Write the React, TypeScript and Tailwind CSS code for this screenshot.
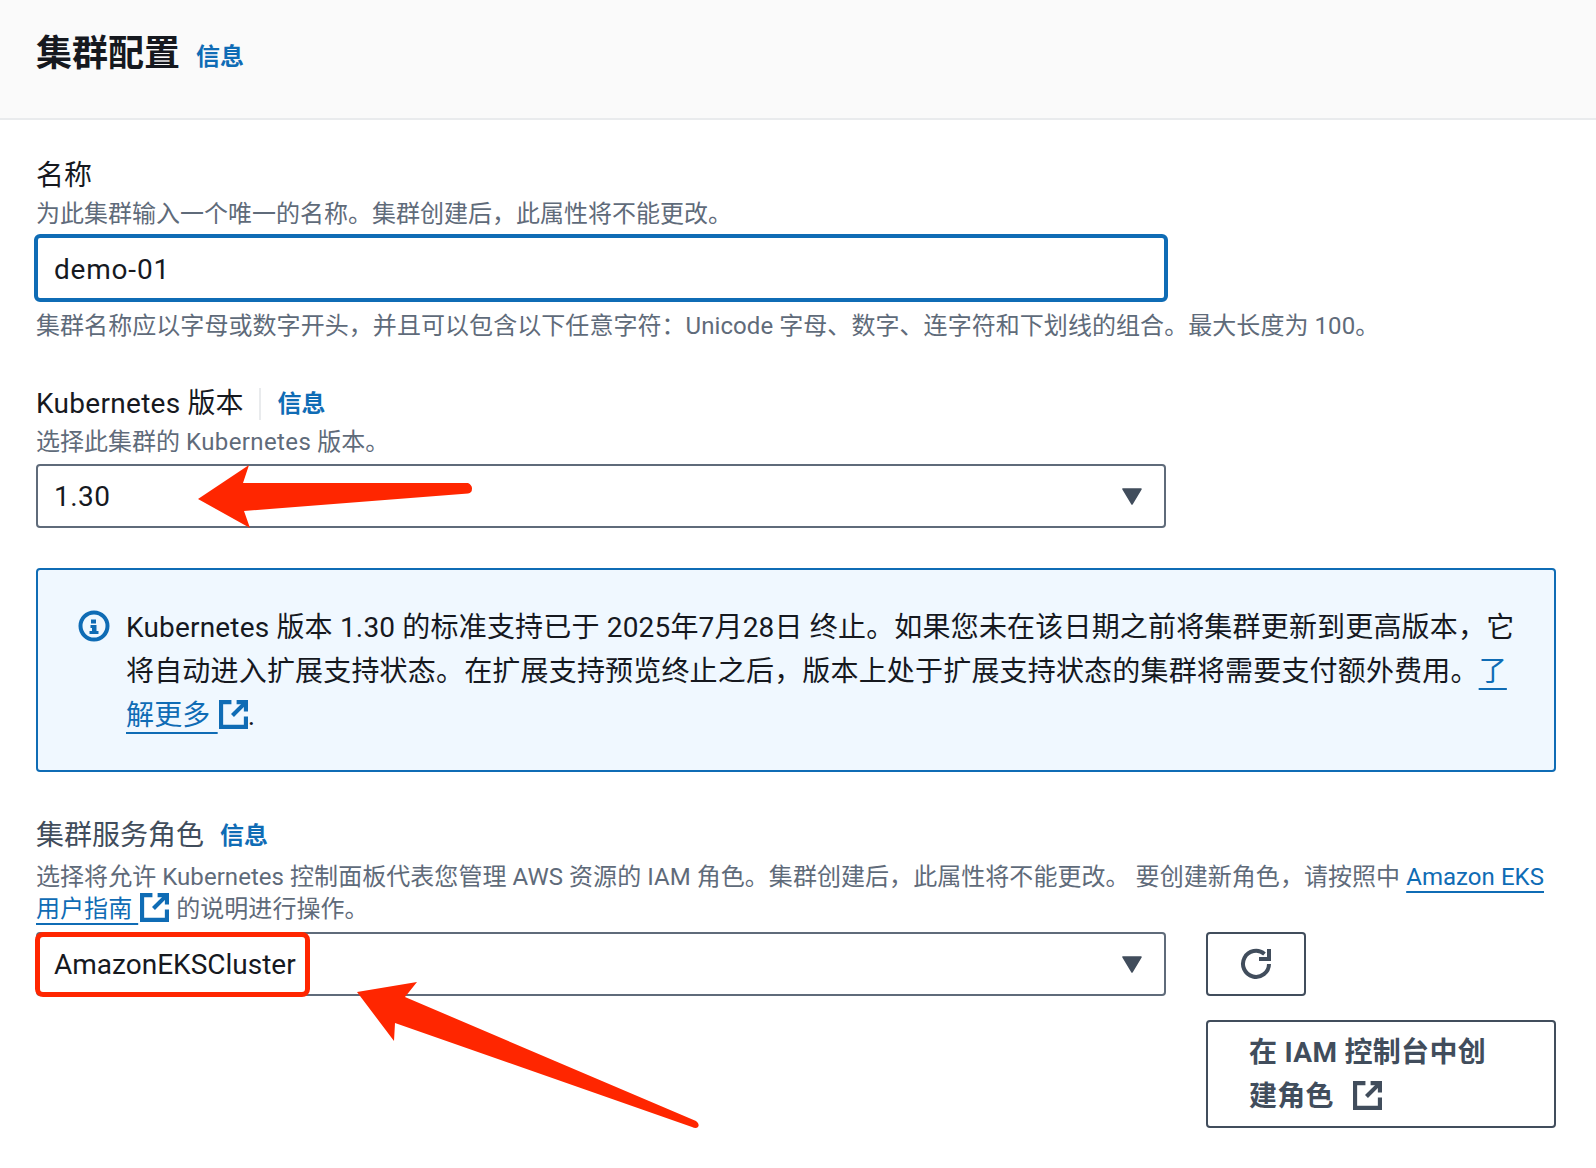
import React from 'react';

const FONT = "font-['Roboto','Noto_Sans_CJK_SC',sans-serif]";

const ExternalIcon = ({ className }: { className: string }) => (
  <svg viewBox="0 0 28 28" fill="none" stroke="currentColor" strokeWidth="4" className={className}>
    <path d="M12 2H2v24h24V16" />
    <path d="M17 2h9v9" />
    <path d="M25 3 13 15" />
  </svg>
);

const Caret = () => (
  <svg viewBox="0 0 20 17" className="w-5 h-[17px] text-[#414d5c] -mt-[2px]">
    <path d="M1 1h18l-9 15z" fill="currentColor" stroke="currentColor" strokeWidth="1.5" strokeLinejoin="round" />
  </svg>
);

const InfoLink = ({ className = '' }: { className?: string }) => (
  <span className={`text-[24px] font-bold text-[#0f6cb5] ${className}`}>信息</span>
);

const SelectBox = ({ value, className = '' }: { value: string; className?: string }) => (
  <div className="flex items-center justify-between h-[64px] w-[1130px] border-2 border-[#5f6b7a] rounded-[4px] pt-[2px] pl-[16px] pr-[22px] text-[28px] text-[#16191f]">
    <span className={className}>{value}</span>
    <Caret />
  </div>
);

export default function App() {
  return (
    <div className={`relative h-[1168px] overflow-hidden bg-white ${FONT}`}>
      {/* Header */}
      <div className="flex items-center gap-[16px] h-[120px] pl-[36px] pb-[10px] bg-[#fafafa] border-b-2 border-[#e9ebed]">
        <h2 className="text-[36px] font-bold text-[#16191f]">集群配置</h2>
        <InfoLink className="mt-[5px]" />
      </div>

      <div className="px-[36px] pt-[38px]">
        {/* Name */}
        <div className="text-[28px] leading-[36px] text-[#16191f]">名称</div>
        <div className="mt-[4px] text-[24px] leading-[32px] text-[#5f6b7a]">
          为此集群输入一个唯一的名称。集群创建后，此属性将不能更改。
        </div>
        <div className="mt-[4px] -ml-[2px] flex items-center h-[68px] w-[1134px] border-4 border-[#0f6cb5] rounded-[6px] pt-[4px] pl-[16px] text-[28px] tracking-[0.8px] text-[#16191f]">
          demo-01
        </div>
        <div className="mt-[8px] text-[24px] leading-[32px] tracking-[0.06px] text-[#5f6b7a]">
          集群名称应以字母或数字开头，并且可以包含以下任意字符：Unicode 字母、数字、连字符和下划线的组合。最大长度为 100。
        </div>

        {/* Kubernetes version */}
        <div className="mt-[44px] flex items-center h-[36px] text-[28px] text-[#16191f]">
          <span><span className="tracking-[0.3px]">Kubernetes</span> 版本</span>
          <span className="ml-[16px] mr-[16px] h-[32px] w-[2px] bg-[#e9ebed]" />
          <InfoLink />
        </div>
        <div className="mt-[4px] text-[24px] leading-[32px] text-[#5f6b7a]">
          选择此集群的 <span className="tracking-[0.4px]">Kubernetes</span> 版本。
        </div>
        <div className="mt-[6px]">
          <SelectBox value="1.30" className="tracking-[0.5px]" />
        </div>

        {/* Alert */}
        <div className="mt-[40px] flex h-[204px] w-[1520px] bg-[#f0f8ff] border-2 border-[#0f6cb5] rounded-[4px] pl-[40px] pr-[35px] pt-[36px]">
          <svg viewBox="0 0 32 32" className="shrink-0 mt-[4px] w-8 h-8 text-[#0f6cb5]">
            <circle cx="16" cy="16" r="13.5" fill="none" stroke="currentColor" strokeWidth="4" />
            <path d="M13 9.5h5v4h-5zM12.5 15h6v6h2v3h-9v-3h2.5v-3h-1.5z" fill="currentColor" />
          </svg>
          <div className="ml-[16px] text-[28px] leading-[44px] tracking-[0.18px] text-[#16191f]">
            Kubernetes 版本 1.30 的标准支持已于 2025年7月28日 终止。如果您未在该日期之前将集群更新到更高版本，它将自动进入扩展支持状态。在扩展支持预览终止之后，版本上处于扩展支持状态的集群将需要支付额外费用。
            <span className="text-[#0f6cb5] underline decoration-2 underline-offset-[7px]">了解更多 </span>
            <ExternalIcon className="inline-block align-[-4px] ml-[1px] w-[29px] h-[29px] text-[#0f6cb5]" />.
          </div>
        </div>

        {/* Cluster service role */}
        <div className="mt-[46px] flex items-center h-[36px] text-[28px] text-[#414d5c]">
          <span>集群服务角色</span>
          <InfoLink className="ml-[16px]" />
        </div>
        <div className="mt-[8px] w-[1520px] text-[24px] leading-[31px] tracking-[0.05px] text-[#5f6b7a]">
          选择将允许 Kubernetes 控制面板代表您管理 AWS 资源的 IAM 角色。集群创建后，此属性将不能更改。 要创建新角色，请按照中 <span className="text-[#0f6cb5] underline decoration-2 underline-offset-[6px]">Amazon EKS 用户指南 </span>
          <ExternalIcon className="inline-block align-[-5px] ml-[2px] mr-[1px] w-[29px] h-[29px] text-[#0f6cb5]" /> 的说明进行操作。
        </div>
        <div className="mt-[7px] flex gap-[40px]">
          <SelectBox value="AmazonEKSCluster" />
          <div className="flex flex-col gap-[24px] w-[350px]">
            <div className="flex items-center justify-center w-[100px] h-[64px] border-2 border-[#414d5c] rounded-[4px] text-[#414d5c]">
              <svg viewBox="0 0 32 32" fill="none" stroke="currentColor" strokeWidth="4" className="w-8 h-8">
                <path d="M29 16A13 13 0 1 1 24.5 6" />
                <path d="M29 1v10H19" />
              </svg>
            </div>
            <div className="h-[108px] border-2 border-[#414d5c] rounded-[4px] pl-[41px] pt-[9px] pr-[55px] text-[28px] leading-[44px] tracking-[0.3px] font-bold text-[#414d5c]">
              在 IAM 控制台中创建角色 <ExternalIcon className="inline-block align-[-4px] ml-[12px] w-[29px] h-[29px]" />
            </div>
          </div>
        </div>
      </div>

      {/* Red annotations drawn on top of the screenshot */}
      <div className="absolute left-[35px] top-[932px] w-[275px] h-[65px] border-[5px] border-[#ff2600] rounded-[8px]" />
      <svg viewBox="0 0 1596 1168" className="absolute left-0 top-0 w-[1596px] h-[1168px] pointer-events-none">
        <path d="M198 499 249 465 243 483 468 483Q472 485 472 488.5 472 493 468 493.5L244 511 250 528Z" fill="#ff2600" />
        <path d="M357 992 417 982 405 997 696 1121Q700 1124 698 1127 696 1129 692 1127L395 1023 394 1041Z" fill="#ff2600" />
      </svg>
    </div>
  );
}
